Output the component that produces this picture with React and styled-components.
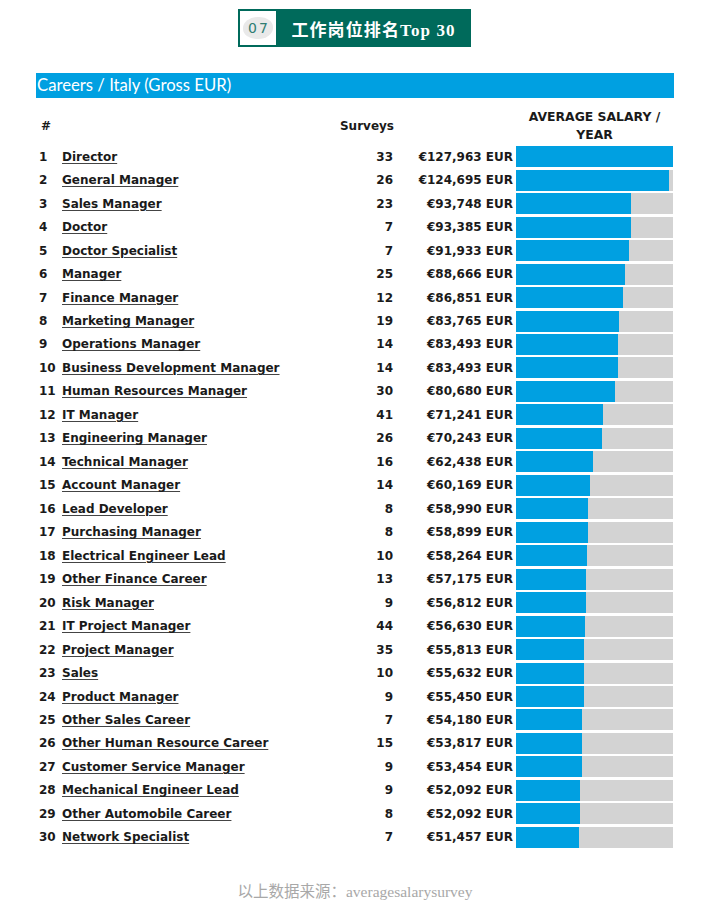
import React from 'react';
import styled, { createGlobalStyle } from 'styled-components';

const GlobalStyle = createGlobalStyle`
  html, body {
    margin: 0;
    padding: 0;
    background: #ffffff;
  }
`;

const careers = [
  ['Director', 33, 127963],
  ['General Manager', 26, 124695],
  ['Sales Manager', 23, 93748],
  ['Doctor', 7, 93385],
  ['Doctor Specialist', 7, 91933],
  ['Manager', 25, 88666],
  ['Finance Manager', 12, 86851],
  ['Marketing Manager', 19, 83765],
  ['Operations Manager', 14, 83493],
  ['Business Development Manager', 14, 83493],
  ['Human Resources Manager', 30, 80680],
  ['IT Manager', 41, 71241],
  ['Engineering Manager', 26, 70243],
  ['Technical Manager', 16, 62438],
  ['Account Manager', 14, 60169],
  ['Lead Developer', 8, 58990],
  ['Purchasing Manager', 8, 58899],
  ['Electrical Engineer Lead', 10, 58264],
  ['Other Finance Career', 13, 57175],
  ['Risk Manager', 9, 56812],
  ['IT Project Manager', 44, 56630],
  ['Project Manager', 35, 55813],
  ['Sales', 10, 55632],
  ['Product Manager', 9, 55450],
  ['Other Sales Career', 7, 54180],
  ['Other Human Resource Career', 15, 53817],
  ['Customer Service Manager', 9, 53454],
  ['Mechanical Engineer Lead', 9, 52092],
  ['Other Automobile Career', 8, 52092],
  ['Network Specialist', 7, 51457],
];

const maxSalary = 127963;

const Page = styled.div`
  width: 704px;
  min-height: 905px;
  display: flex;
  flex-direction: column;
  align-items: center;
  padding-top: 9px;
  box-sizing: border-box;
`;

const Badge = styled.div`
  display: flex;
  width: 233px;
  height: 38px;
  border: 2px solid #006a5b;
  box-sizing: border-box;
  margin-left: 5px;
`;

const BadgeNum = styled.div`
  width: 36px;
  display: flex;
  align-items: center;
  justify-content: center;
  background: #fff;
  span {
    display: inline-flex;
    align-items: center;
    justify-content: center;
    width: 30px;
    height: 22px;
    border-radius: 50% 45% 50% 45%;
    background: #e9e9e9;
    color: #2f7d73;
    font-family: 'DejaVu Sans', sans-serif;
    font-size: 14px;
    letter-spacing: 2px;
    padding-left: 2px;
    box-sizing: border-box;
  }
`;

const BadgeTitle = styled.div`
  flex: 1;
  background: #006a5b;
  color: #fff;
  display: flex;
  align-items: center;
  justify-content: center;
  font-family: 'Liberation Serif', 'Noto Sans CJK SC', serif;
  font-weight: bold;
  font-size: 17px;
  letter-spacing: 1.1px;
  padding-left: 2px;
`;

const Board = styled.div`
  width: 638px;
  margin-top: 26px;
  margin-left: 6px;
`;

const TitleBar = styled.div`
  height: 25px;
  background: #00a0e1;
  color: #fff;
  font-family: 'Lato', 'Open Sans', sans-serif;
  font-size: 16.7px;
  line-height: 25px;
  padding-left: 1px;
`;

const Table = styled.div`
  display: grid;
  grid-template-columns: 23px 291px 43px 120px 157px;
  padding-left: 3px;
  font-family: 'DejaVu Sans', Verdana, sans-serif;
  font-weight: bold;
  color: #1a1a1a;
`;

const HeadCell = styled.div`
  height: 47px;
  padding-top: 8px;
  box-sizing: border-box;
  display: flex;
  align-items: center;
  justify-content: ${(p) => p.$align || 'flex-start'};
  text-align: center;
  font-size: ${(p) => p.$size || 12}px;
  line-height: 18px;
  padding-left: ${(p) => p.$pad || 0}px;
  margin-right: ${(p) => p.$gap || 0}px;
  white-space: ${(p) => (p.$wrap ? 'normal' : 'nowrap')};
`;

const Cell = styled.div`
  height: 23.48px;
  display: flex;
  align-items: center;
  justify-content: ${(p) => p.$align || 'flex-start'};
  font-size: 12px;
  white-space: nowrap;
  margin-right: ${(p) => p.$gap || 0}px;
`;

const NameLink = styled.a`
  color: #1a1a1a;
  text-decoration: underline;
  text-decoration-thickness: 1px;
  text-underline-offset: 2px;
  text-decoration-color: #444;
  cursor: pointer;
`;

const Track = styled.div`
  height: 21px;
  width: 157px;
  background: #d3d3d3;
  display: flex;
`;

const Fill = styled.div`
  height: 100%;
  background: #00a0e1;
`;

const Footer = styled.div`
  margin-top: 30px;
  font-family: 'Liberation Serif', 'Noto Sans CJK SC', serif;
  font-size: 15.5px;
  color: #a8a8a8;
  padding-left: 6px;
`;

const fmt = (n) => '€' + n.toLocaleString('en-US') + ' EUR';

export default function App() {
  return (
    <>
      <GlobalStyle />
      <Page>
        <Badge>
          <BadgeNum>
            <span>07</span>
          </BadgeNum>
          <BadgeTitle>工作岗位排名Top 30</BadgeTitle>
        </Badge>
        <Board>
          <TitleBar>Careers / Italy (Gross EUR)</TitleBar>
          <Table>
            <HeadCell $pad={2}>#</HeadCell>
            <HeadCell />
            <HeadCell $align="flex-end" $gap={2}>Surveys</HeadCell>
            <HeadCell />
            <HeadCell $align="center" $wrap $size={12.4}>
              AVERAGE SALARY / YEAR
            </HeadCell>
            {careers.map(([name, surveys, salary], i) => (
              <React.Fragment key={name}>
                <Cell>{i + 1}</Cell>
                <Cell>
                  <NameLink>{name}</NameLink>
                </Cell>
                <Cell $align="flex-end" $gap={3}>
                  {surveys}
                </Cell>
                <Cell $align="flex-end" $gap={3}>
                  {fmt(salary)}
                </Cell>
                <Cell>
                  <Track>
                    <Fill style={{ width: `${(salary / maxSalary) * 100}%` }} />
                  </Track>
                </Cell>
              </React.Fragment>
            ))}
          </Table>
        </Board>
        <Footer>以上数据来源：averagesalarysurvey</Footer>
      </Page>
    </>
  );
}
